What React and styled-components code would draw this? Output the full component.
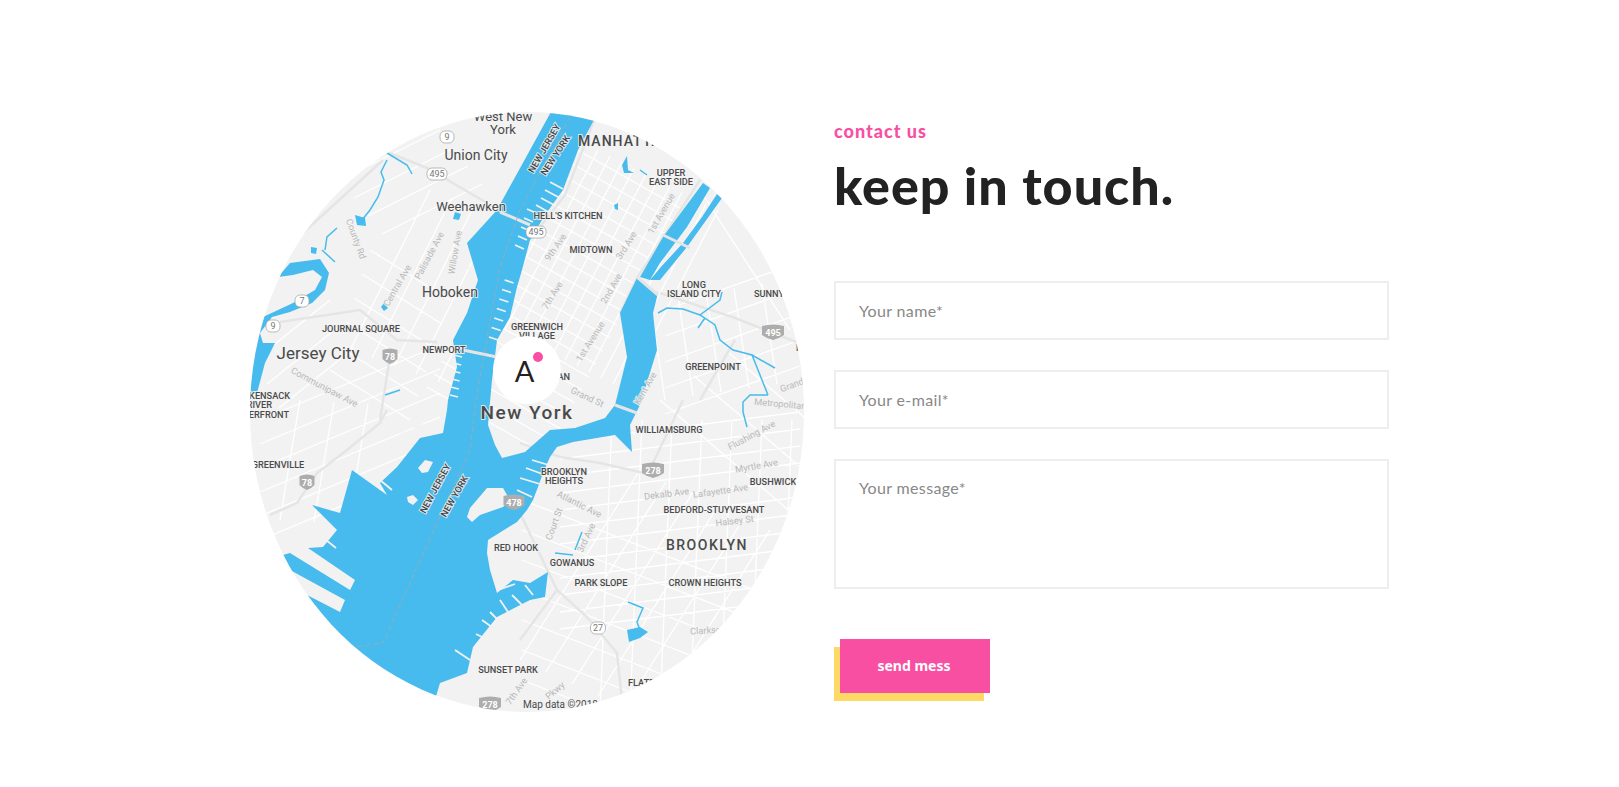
import React from "react";
import styled, {createGlobalStyle} from "styled-components";

const GlobalStyle = createGlobalStyle`
  html, body {
    margin: 0;
    background: #fff;
    font-family: "Lato", "Open Sans", sans-serif;
  }
`;

const Page = styled.div`
  display: grid;
  grid-template-columns: 554px 555px;
  column-gap: 30px;
  padding: 112px 0 0 250px;
  height: 787px;
  box-sizing: border-box;
  overflow: hidden;
`;

const MapCircle = styled.div`
  position: relative;
  width: 554px;
  height: 600px;
  border-radius: 50%;
  overflow: hidden;
  background: #f2f2f2;
`;

const MapSvg = styled.svg`
  display: block;
  width: 554px;
  height: 600px;
`;

const MapLabel = styled.text`
  font-family: "Roboto", sans-serif;
  font-size: ${props => props.$size || 9.2}px;
  font-weight: ${props => props.$weight || 500};
  letter-spacing: ${props => props.$spacing || 0}px;
  fill: ${props => props.$color || "#4a4a4a"};
  text-anchor: ${props => props.$anchor || "middle"};
  paint-order: stroke;
  stroke: rgba(242, 242, 242, 0.85);
  stroke-width: 2px;
`;

const Marker = styled.div`
  position: absolute;
  left: 243px;
  top: 224px;
  width: 68px;
  height: 68px;
  padding-right: 5px;
  box-sizing: border-box;
  border-radius: 50%;
  background: #fff;
  display: flex;
  align-items: center;
  justify-content: center;
  font-size: 29px;
  font-weight: 400;
  color: #222;
`;

const MarkerDot = styled.span`
  position: absolute;
  left: 40px;
  top: 16px;
  width: 10px;
  height: 10px;
  border-radius: 50%;
  background: #f94fa3;
`;

const Content = styled.div`
  display: flex;
  flex-direction: column;
`;

const Eyebrow = styled.div`
  font-size: 18px;
  font-weight: 900;
  line-height: 22px;
  letter-spacing: 1px;
  margin-top: 8px;
  color: #f94fa3;
`;

const Title = styled.h1`
  margin: 12px 0 0;
  font-size: 52px;
  line-height: 62px;
  letter-spacing: 1px;
  font-weight: 900;
  color: #222;
`;

const Form = styled.form`
  display: flex;
  flex-direction: column;
  gap: 30px;
  margin-top: 65px;
`;

const Field = styled.input`
  box-sizing: border-box;
  width: 100%;
  height: 59px;
  padding: 0 23px;
  border: 2px solid #eee;
  outline: none;
  font-family: inherit;
  font-size: 16px;
  letter-spacing: 0.35px;
  &::placeholder {
    color: #888;
  }
`;

const MessageField = styled.textarea`
  box-sizing: border-box;
  width: 100%;
  height: 130px;
  padding: 17px 23px;
  border: 2px solid #eee;
  outline: none;
  resize: none;
  font-family: inherit;
  font-size: 16px;
  letter-spacing: 0.35px;
  &::placeholder {
    color: #888;
  }
`;

const SendWrap = styled.div`
  position: relative;
  width: 150px;
  height: 54px;
  margin: 20px 0 0 6px;
  isolation: isolate;
  &::before {
    content: "";
    position: absolute;
    left: -6px;
    top: 8px;
    width: 150px;
    height: 54px;
    background: #ffd966;
    z-index: -1;
  }
`;

const SendButton = styled.button`
  display: block;
  width: 100%;
  height: 100%;
  padding: 0 2px 2px 0;
  border: none;
  background: #f94fa3;
  color: #fff;
  font-family: "Noto Sans", sans-serif;
  font-size: 14px;
  font-weight: 700;
`;

const WATER = "#47bbed";
const LAND = "#f2f2f2";

// draws n parallel copies of one line
const parallels = (x1, y1, x2, y2, dx, dy, n) => {
  let d = "";
  for (let i = 0; i < n; i++) {
    d += `M${x1 + dx * i} ${y1 + dy * i}L${x2 + dx * i} ${y2 + dy * i}`;
  }
  return d;
};

const roads = [
  parallels(505, 330, 598, 150, 12, 6, 11),
  parallels(560, 140, 680, 208, -7, 13, 20),
  parallels(665, 310, 800, 262, 0, 26, 5),
  parallels(700, 190, 790, 330, 30, -4, 4),
  parallels(650, 300, 665, 400, 28, -4, 6),
  parallels(560, 442, 800, 412, 0, 17, 12),
  parallels(612, 420, 600, 712, 30, 0, 8),
  parallels(522, 500, 780, 600, 0, 30, 7),
  parallels(520, 660, 640, 470, 26, 12, 8),
  parallels(660, 400, 800, 520, 34, -24, 3),
  parallels(430, 190, 350, 350, 22, 8, 6),
  parallels(370, 250, 450, 300, -8, 24, 6),
  parallels(260, 420, 440, 345, 0, 24, 6),
  parallels(300, 400, 280, 520, 34, 2, 3),
  parallels(340, 180, 440, 130, 14, 18, 4),
  parallels(255, 360, 330, 300, 12, 24, 3),
].join("");

const highways = [
  "M303 233L383 160",
  "M387 152L427 168L487 203",
  "M280 322L360 310L397 340L437 342",
  "M390 356L380 420",
  "M387 410L380 423L347 450L317 473L297 503L270 515",
  "M500 457L520 513L557 590L587 617L617 653L622 700",
  "M557 590L520 640",
  "M520 443L560 457L600 463L653 475",
  "M653 463L683 400",
  "M660 293L735 318L804 345",
  "M700 400L735 340",
  "M595 118L565 195L530 240",
  "M620 313L637 278L700 180",
].join("");

const waterMain = "552,110 595,118 578,150 563,190 545,215 530,240 522,270 517,287 510,317 497,340 492,380 488,425 495,445 502,458 525,452 550,430 575,428 605,418 615,405 627,357 620,313 637,278 658,293 653,313 657,350 640,405 630,425 632,452 615,435 585,440 573,442 557,447 550,457 543,473 538,487 533,500 527,510 517,522 488,540 487,553 490,570 497,593 513,580 530,583 548,572 545,597 530,600 497,617 473,647 467,673 440,683 437,693 430,720 250,720 250,640 300,620 307,595 340,612 345,600 290,570 283,555 290,553 350,590 355,580 308,548 323,547 337,530 312,505 340,513 352,470 387,495 380,483 397,467 420,438 443,433 447,410 448,400 457,367 453,340 467,313 478,280 467,243 497,210 530,150";

const waterAreas = [
  "640,277 663,237 703,183 710,188 687,227 660,263 650,280",
  "660,268 683,243 702,217 717,194 722,198 687,247 660,280 650,280",
  "278,277 290,263 320,259 329,273 325,290 312,303 290,312 272,317 260,333 263,343 275,343 265,363 257,393 248,393 253,340 263,317 293,303 315,290 322,277 313,270 293,275",
  "355,215 365,218 366,226 357,225",
  "311,247 317,248 316,254 311,253",
  "622,165 627,156 628,170 634,173 624,173",
  "627,630 640,627 648,632 640,638 629,642",
  "384,303 388,308 384,311 381,307",
  "455,212 461,214 459,220 453,219",
  "614,205 618,203 618,210 615,209",
];

const streams = [
  "M387 153L407 165L412 174",
  "M387 160L381 172L384 180L378 197L370 210L362 220",
  "M337 228L327 237L325 250",
  "M658 313L667 308L683 309L700 315L715 325L720 340L733 350L752 355L762 380L768 395",
  "M752 355L775 368",
  "M768 395L750 395L743 402L743 412L747 427",
  "M700 315L720 300L722 292",
  "M705 318L698 328",
  "M628 602L643 608L637 622L640 630",
  "M555 553L573 555",
  "M582 532L575 550",
  "M400 390L385 395",
  "M322 250L335 262",
  "M640 170L647 175",
];

const bridges = [
  "M500 212L530 225",
  "M463 350L497 357",
  "M637 277L658 295",
  "M615 405L637 413",
  "M663 235L690 248",
];

const piers = [
  parallels(489, 337, 498, 340, 2.6, -9.5, 7),
  parallels(515, 245, 524, 249, 3, -9, 5),
  parallels(466, 302, 460, 300, 2, -8, 5),
  parallels(450, 395, 458, 397, 0.8, -8, 7),
  "M536 205L552 214", "M541 198L556 206", "M545 190L560 198", "M550 182L563 189",
  "M517 490L532 497", "M520 478L540 484", "M526 468L548 476", "M532 460L552 466",
  "M500 600L508 612", "M490 612L500 622", "M482 620L496 630", "M476 634L488 640",
  "M470 660L455 650", "M512 595L522 605", "M525 585L533 595",
  "M500 572L498 590L515 584",
  "M420 435L418 422", "M400 440L405 425", "M380 480L392 490",
  "M326 540L336 548", "M316 520L332 532",
];

const land = [
  "467,517 470,508 487,488 503,488 510,500 503,507 480,515 472,522",
  "418,468 425,460 433,462 428,472 422,473",
  "407,497 413,495 418,500 413,505 408,502",
  "440,420 420,430 390,420 385,416 420,425",
];

const places = [
  {x: 503, y: 121, t: "West New", s: 13, w: 400},
  {x: 503, y: 134, t: "York", s: 13, w: 400},
  {x: 476, y: 160, t: "Union City", s: 14, w: 400},
  {x: 471, y: 211, t: "Weehawken", s: 13, w: 400},
  {x: 450, y: 297, t: "Hoboken", s: 14, w: 400},
  {x: 361, y: 332, t: "JOURNAL SQUARE"},
  {x: 444, y: 353, t: "NEWPORT"},
  {x: 318, y: 359, t: "Jersey City", s: 17, w: 400},
  {x: 290, y: 399, t: "HACKENSACK", a: "end"},
  {x: 272, y: 408, t: "RIVER", a: "end"},
  {x: 289, y: 418, t: "WATERFRONT", a: "end"},
  {x: 278, y: 468, t: "GREENVILLE"},
  {x: 578, y: 146, t: "MANHATTAN", s: 14, sp: 1, a: "start"},
  {x: 671, y: 176, t: "UPPER"},
  {x: 671, y: 185, t: "EAST SIDE"},
  {x: 568, y: 219, t: "HELL'S KITCHEN"},
  {x: 591, y: 253, t: "MIDTOWN"},
  {x: 694, y: 288, t: "LONG"},
  {x: 694, y: 297, t: "ISLAND CITY"},
  {x: 754, y: 297, t: "SUNNYSIDE", a: "start"},
  {x: 537, y: 330, t: "GREENWICH"},
  {x: 537, y: 339, t: "VILLAGE"},
  {x: 570, y: 380, t: "AN", a: "end"},
  {x: 713, y: 370, t: "GREENPOINT"},
  {x: 796, y: 351, t: "MASPETH", a: "start"},
  {x: 527, y: 419, t: "New York", s: 19, sp: 1.5},
  {x: 669, y: 433, t: "WILLIAMSBURG"},
  {x: 564, y: 475, t: "BROOKLYN"},
  {x: 564, y: 484, t: "HEIGHTS"},
  {x: 773, y: 485, t: "BUSHWICK"},
  {x: 714, y: 513, t: "BEDFORD-STUYVESANT"},
  {x: 707, y: 550, t: "BROOKLYN", s: 14, sp: 1.5},
  {x: 516, y: 551, t: "RED HOOK"},
  {x: 572, y: 566, t: "GOWANUS"},
  {x: 601, y: 586, t: "PARK SLOPE"},
  {x: 705, y: 586, t: "CROWN HEIGHTS"},
  {x: 508, y: 673, t: "SUNSET PARK"},
  {x: 628, y: 686, t: "FLATBUSH", a: "start"},
  {x: 523, y: 708, t: "Map data ©2018", s: 10, w: 400, a: "start"},
];

const streets = [
  {x: 353, y: 240, r: 70, t: "County Rd"},
  {x: 400, y: 287, r: -60, t: "Central Ave"},
  {x: 432, y: 257, r: -62, t: "Palisade Ave"},
  {x: 458, y: 253, r: -80, t: "Willow Ave"},
  {x: 323, y: 390, r: 28, t: "Communipaw Ave"},
  {x: 558, y: 249, r: -55, t: "9th Ave"},
  {x: 555, y: 297, r: -58, t: "7th Ave"},
  {x: 629, y: 247, r: -58, t: "3rd Ave"},
  {x: 614, y: 290, r: -60, t: "2nd Ave"},
  {x: 664, y: 215, r: -60, t: "1st Avenue"},
  {x: 593, y: 343, r: -58, t: "1st Avenue"},
  {x: 586, y: 400, r: 25, t: "Grand St"},
  {x: 648, y: 390, r: -60, t: "Kent Ave"},
  {x: 793, y: 388, r: -20, t: "Grand"},
  {x: 780, y: 407, r: 5, t: "Metropolitan"},
  {x: 753, y: 438, r: -28, t: "Flushing Ave"},
  {x: 757, y: 469, r: -10, t: "Myrtle Ave"},
  {x: 667, y: 497, r: -7, t: "Dekalb Ave"},
  {x: 721, y: 494, r: -8, t: "Lafayette Ave"},
  {x: 735, y: 524, r: -7, t: "Halsey St"},
  {x: 578, y: 507, r: 27, t: "Atlantic Ave"},
  {x: 557, y: 525, r: -70, t: "Court St"},
  {x: 589, y: 539, r: -65, t: "3rd Ave"},
  {x: 717, y: 633, r: -3, t: "Clarkson Ave"},
  {x: 519, y: 693, r: -55, t: "7th Ave"},
  {x: 557, y: 693, r: -40, t: "Pkwy"},
];

const borders = [
  {x: 547, y: 150, r: -60, t: "NEW JERSEY"},
  {x: 558, y: 157, r: -57, t: "NEW YORK"},
  {x: 438, y: 490, r: -62, t: "NEW JERSEY"},
  {x: 457, y: 498, r: -60, t: "NEW YORK"},
];

const stateShields = [
  {x: 447, y: 137, t: "9", w: 14},
  {x: 437, y: 174, t: "495", w: 20},
  {x: 302, y: 301, t: "7", w: 14},
  {x: 273, y: 326, t: "9", w: 14},
  {x: 536, y: 232, t: "495", w: 20},
  {x: 598, y: 628, t: "27", w: 15},
];

const interstates = [
  {x: 390, y: 356, t: "78", w: 15},
  {x: 773, y: 332, t: "495", w: 22},
  {x: 653, y: 470, t: "278", w: 22},
  {x: 514, y: 502, t: "478", w: 21},
  {x: 490, y: 704, t: "278", w: 22},
  {x: 307, y: 482, t: "78", w: 15},
];

const ShieldText = styled.text`
  font-family: "Roboto", sans-serif;
  font-size: 9px;
  font-weight: ${props => props.$bold ? 700 : 400};
  text-anchor: middle;
  fill: ${props => props.$bold ? "#fff" : "#777"};
`;

const StateShield = ({x, y, t, w}) => (
  <g>
    <rect x={x - w / 2} y={y - 6} width={w} height={12} rx={5} fill="#fff" stroke="#aaa" strokeWidth="0.8"/>
    <ShieldText x={x} y={y + 3}>{t}</ShieldText>
  </g>
);

const Interstate = ({x, y, t, w}) => (
  <g>
    <path
      d={`M${x - w / 2} ${y - 6}Q${x} ${y - 9} ${x + w / 2} ${y - 6}L${x + w / 2} ${y + 3}Q${x + w / 4} ${y + 7} ${x} ${y + 8}Q${x - w / 4} ${y + 7} ${x - w / 2} ${y + 3}Z`}
      fill="#adadad"
    />
    <ShieldText $bold x={x} y={y + 4}>{t}</ShieldText>
  </g>
);

const CityMap = () => (
  <MapSvg viewBox="250 112 554 600">
    <path d={roads} fill="none" stroke="#fff" strokeWidth="1.3"/>
    <path d={highways} fill="none" stroke="#e5e5e5" strokeWidth="2.5"/>
    <polygon points={waterMain} fill={WATER}/>
    {waterAreas.map(points => <polygon key={points} points={points} fill={WATER}/>)}
    {streams.map(d => <path key={d} d={d} fill="none" stroke={WATER} strokeWidth="1.5"/>)}
    {piers.map(d => <path key={d} d={d} fill="none" stroke={LAND} strokeWidth="1.8"/>)}
    {land.map(points => <polygon key={points} points={points} fill={LAND}/>)}
    {bridges.map(d => <path key={d} d={d} fill="none" stroke="#e5e5e5" strokeWidth="3"/>)}
    <path
      d="M570 117L520 210L500 267L477 393L470 450L437 523L383 643L353 647"
      fill="none"
      stroke="#a5a9ab"
      strokeWidth="0.8"
      strokeDasharray="5 3"
    />
    {streets.map(s => (
      <MapLabel key={s.t + s.x} $weight={400} $color="#b9b9b9" x={s.x} y={s.y} transform={`rotate(${s.r} ${s.x} ${s.y})`}>
        {s.t}
      </MapLabel>
    ))}
    {borders.map(s => (
      <MapLabel key={s.t + s.x} $color="#444" x={s.x} y={s.y} transform={`rotate(${s.r} ${s.x} ${s.y})`}>
        {s.t}
      </MapLabel>
    ))}
    {stateShields.map(s => <StateShield key={s.t + s.x} {...s}/>)}
    {interstates.map(s => <Interstate key={s.t + s.x} {...s}/>)}
    {places.map(p => (
      <MapLabel key={p.t + p.x} x={p.x} y={p.y} $size={p.s} $weight={p.w} $spacing={p.sp} $anchor={p.a}>
        {p.t}
      </MapLabel>
    ))}
  </MapSvg>
);

const App = () => {
  return (
    <Page>
      <GlobalStyle/>
      <MapCircle>
        <CityMap/>
        <Marker>
          A
          <MarkerDot/>
        </Marker>
      </MapCircle>
      <Content>
        <Eyebrow>contact us</Eyebrow>
        <Title>keep in touch.</Title>
        <Form onSubmit={e => e.preventDefault()}>
          <Field placeholder="Your name*"/>
          <Field placeholder="Your e-mail*"/>
          <MessageField placeholder="Your message*"/>
          <SendWrap>
            <SendButton>send mess</SendButton>
          </SendWrap>
        </Form>
      </Content>
    </Page>
  );
};

export default App;
